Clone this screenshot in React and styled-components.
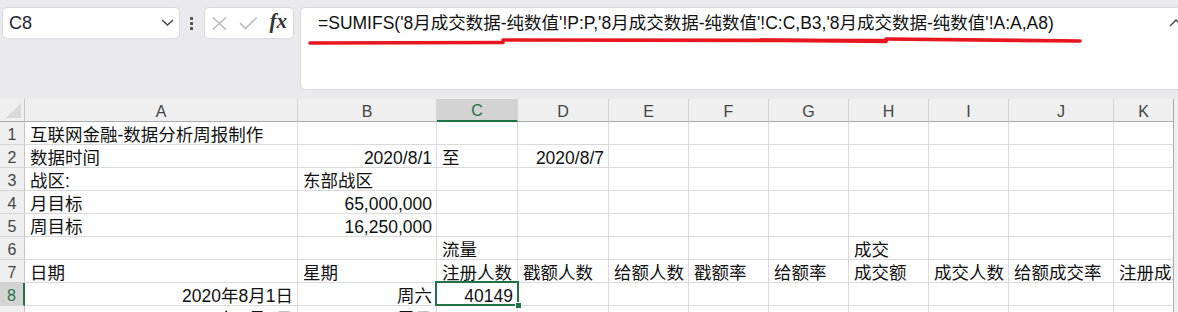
import React from "react";
import styled, { createGlobalStyle } from "styled-components";

const GREEN = "#217346";
const FONT = `"Liberation Sans", "Noto Sans CJK SC", sans-serif`;

const GlobalStyle = createGlobalStyle`
  html, body {
    margin: 0;
    padding: 0;
    overflow: hidden;
    background: #e9e9ee;
  }
  body {
    width: 1178px;
    height: 312px;
    font-family: ${FONT};
  }
`;

const columns = [
  { key: "A", width: 273 },
  { key: "B", width: 139 },
  { key: "C", width: 81 },
  { key: "D", width: 91 },
  { key: "E", width: 80 },
  { key: "F", width: 80 },
  { key: "G", width: 80 },
  { key: "H", width: 80 },
  { key: "I", width: 80 },
  { key: "J", width: 105 },
  { key: "K", width: 60 },
];

const rows = [
  { n: 1, cells: { A: ["互联网金融-数据分析周报制作"] } },
  {
    n: 2,
    cells: {
      A: ["数据时间"],
      B: ["2020/8/1", "right"],
      C: ["至"],
      D: ["2020/8/7", "right"],
    },
  },
  { n: 3, cells: { A: ["战区:"], B: ["东部战区"] } },
  { n: 4, cells: { A: ["月目标"], B: ["65,000,000", "right"] } },
  { n: 5, cells: { A: ["周目标"], B: ["16,250,000", "right"] } },
  { n: 6, cells: { C: ["流量"], H: ["成交"] } },
  {
    n: 7,
    cells: {
      A: ["日期"],
      B: ["星期"],
      C: ["注册人数"],
      D: ["戳额人数"],
      E: ["给额人数"],
      F: ["戳额率"],
      G: ["给额率"],
      H: ["成交额"],
      I: ["成交人数"],
      J: ["给额成交率"],
      K: ["注册成交率"],
    },
  },
  {
    n: 8,
    cells: {
      A: ["2020年8月1日", "right"],
      B: ["周六", "right"],
      C: ["40149", "right"],
    },
  },
  { n: 9, cells: { A: ["2020年8月2日", "right"], B: ["周日", "right"] } },
];

const ACTIVE_COL = "C";
const ACTIVE_ROW = 8;

const App = () => {
  return (
    <>
      <GlobalStyle />
      <Page>
        <TopBar>
          <NameBox>
            <span>C8</span>
            <svg width="13" height="8" viewBox="0 0 13 8">
              <polyline
                points="1,1 6.5,6 12,1"
                fill="none"
                stroke="#444"
                strokeWidth="1.4"
              />
            </svg>
          </NameBox>
          <Dots>
            <Dot />
            <Dot />
            <Dot />
          </Dots>
          <FxBox>
            <svg width="16" height="15" viewBox="0 0 16 15">
              <path
                d="M1 1 L15 14 M15 1 L1 14"
                stroke="#b4b4b4"
                strokeWidth="1.4"
                fill="none"
              />
            </svg>
            <svg width="20" height="14" viewBox="0 0 20 14">
              <polyline
                points="1,7 7,13 19,1"
                fill="none"
                stroke="#b4b4b4"
                strokeWidth="1.4"
              />
            </svg>
            <FxLabel>fx</FxLabel>
          </FxBox>
          <FormulaBox>
            <FormulaText>
              =SUMIFS('8月成交数据-纯数值'!P:P,'8月成交数据-纯数值'!C:C,B3,'8月成交数据-纯数值'!A:A,A8)
            </FormulaText>
            <Collapse width="14" height="9" viewBox="0 0 14 9">
              <polyline
                points="1,8 7,2 13,8"
                fill="none"
                stroke="#444"
                strokeWidth="1.4"
              />
            </Collapse>
            <Scribble width="800" height="50" viewBox="0 0 800 50">
              <g
                fill="none"
                stroke="#e8161f"
                strokeWidth="3.6"
                strokeLinecap="round"
              >
                <path d="M9 35 L202 34.5" />
                <path d="M202 32 L585 32.5" />
                <path d="M460 32 L585 33.5" />
                <path d="M585 31 L779 33" />
              </g>
            </Scribble>
          </FormulaBox>
        </TopBar>

        <Sheet>
          <Corner>
            <CornerMark />
          </Corner>
          {columns.map((c) => (
            <ColHead
              key={c.key}
              $active={c.key === ACTIVE_COL}
              $edge={c.key === "K"}
            >
              {c.key}
            </ColHead>
          ))}
          <Edge $head />

          {rows.map((r) => (
            <React.Fragment key={r.n}>
              <RowHead $active={r.n === ACTIVE_ROW}>{r.n}</RowHead>
              {columns.map((c) => {
                const cell = r.cells[c.key];
                const selected = r.n === ACTIVE_ROW && c.key === ACTIVE_COL;
                return (
                  <Cell
                    key={c.key}
                    $align={cell ? cell[1] : "left"}
                    $selected={selected}
                    $edge={c.key === "K"}
                  >
                    {cell ? cell[0] : ""}
                  </Cell>
                );
              })}
              <Edge />
            </React.Fragment>
          ))}
        </Sheet>
      </Page>
    </>
  );
};

export default App;

const Page = styled.div`
  display: flex;
  flex-direction: column;
  width: 1178px;
  height: 312px;
  overflow: hidden;
`;

const TopBar = styled.div`
  display: flex;
  flex-shrink: 0;
  align-items: flex-start;
  height: 99px;
  padding: 7px 0 0 2px;
  box-sizing: border-box;
  background: #e9e9ee;
`;

const NameBox = styled.div`
  display: flex;
  align-items: center;
  justify-content: space-between;
  width: 178px;
  height: 32px;
  padding: 0 5px 0 6px;
  box-sizing: border-box;
  background: #fff;
  border: 1px solid #d9d9df;
  border-radius: 5px;
  font-size: 18px;
  color: #1f2333;
`;

const Dots = styled.div`
  display: flex;
  flex-direction: column;
  gap: 2px;
  margin: 10px 11px 0 10px;
`;

const Dot = styled.div`
  width: 3px;
  height: 3px;
  background: #555;
  border-radius: 0.5px;
`;

const FxBox = styled.div`
  display: flex;
  align-items: center;
  gap: 12px;
  width: 90px;
  height: 32px;
  padding: 0 6px 0 7px;
  box-sizing: border-box;
  background: #fff;
  border: 1px solid #d9d9df;
  border-radius: 5px;
`;

const FxLabel = styled.span`
  font-family: "Liberation Serif", "DejaVu Serif", serif;
  font-style: italic;
  font-weight: bold;
  font-size: 21px;
  color: #333;
  margin-left: auto;
  margin-top: -3px;
`;

const FormulaBox = styled.div`
  position: relative;
  flex: 1;
  height: 83px;
  margin: 0 -20px 0 6px;
  padding: 4px 0 0 17px;
  box-sizing: border-box;
  background: #fff;
  border: 1px solid #d9d9df;
  border-radius: 5px;
`;

const FormulaText = styled.div`
  font-size: 17.5px;
  line-height: 22px;
  color: #111;
  white-space: nowrap;
`;

const Collapse = styled.svg`
  position: absolute;
  top: 10px;
  right: 14px;
`;

const Scribble = styled.svg`
  position: absolute;
  left: 0;
  top: 0;
  pointer-events: none;
`;

const Sheet = styled.div`
  display: grid;
  flex-shrink: 0;
  grid-template-columns: 25px ${columns.map((c) => `${c.width}px`).join(" ")} 1fr;
  grid-auto-rows: 23px;
  background: #fff;
`;

const Corner = styled.div`
  position: relative;
  background: #efefef;
  border-right: 1px solid #c6c6c6;
  border-bottom: 1px solid #ababab;
  box-sizing: border-box;
`;

const CornerMark = styled.div`
  position: absolute;
  right: 3px;
  bottom: 3px;
  width: 0;
  height: 0;
  border-left: 15px solid transparent;
  border-bottom: 15px solid #d9d9d9;
`;

const ColHead = styled.div`
  display: flex;
  align-items: flex-end;
  justify-content: center;
  box-sizing: border-box;
  font-size: 16px;
  line-height: 18px;
  color: ${(p) => (p.$active ? GREEN : "#444")};
  background: ${(p) => (p.$active ? "#d3d3d3" : "#efefef")};
  border-right: 1px solid ${(p) => (p.$edge ? "#a8a8a8" : "#d4d4d4")};
  border-bottom: ${(p) =>
    p.$active ? `2px solid ${GREEN}` : "1px solid #ababab"};
`;

const RowHead = styled.div`
  display: flex;
  align-items: flex-end;
  justify-content: center;
  box-sizing: border-box;
  font-size: 16px;
  line-height: 18px;
  color: ${(p) => (p.$active ? GREEN : "#444")};
  background: ${(p) => (p.$active ? "#d3d3d3" : "#efefef")};
  border-right: ${(p) =>
    p.$active ? `2px solid ${GREEN}` : "1px solid #c6c6c6"};
  border-bottom: 1px solid #d4d4d4;
`;

const Cell = styled.div`
  position: relative;
  display: flex;
  align-items: flex-end;
  justify-content: ${(p) => (p.$align === "right" ? "flex-end" : "flex-start")};
  padding: 0 4px 0 5px;
  box-sizing: border-box;
  font-size: 17.5px;
  line-height: 18px;
  color: #111;
  white-space: nowrap;
  overflow: ${(p) => (p.$selected ? "visible" : "hidden")};
  z-index: ${(p) => (p.$selected ? 2 : "auto")};
  border-right: 1px solid ${(p) => (p.$edge ? "#a8a8a8" : "#dadada")};
  border-bottom: 1px solid #dadada;

  ${(p) =>
    p.$selected &&
    `
    &::after {
      content: "";
      position: absolute;
      left: -2px;
      top: -2px;
      right: -2px;
      bottom: -1px;
      border: 2px solid ${GREEN};
    }
    &::before {
      content: "";
      position: absolute;
      right: -5px;
      bottom: -4px;
      width: 5px;
      height: 5px;
      background: ${GREEN};
      border: 1px solid #fff;
      z-index: 3;
    }
  `}
`;

const Edge = styled.div`
  background: ${(p) => (p.$head ? "#efefef" : "#f0f0f0")};
`;
